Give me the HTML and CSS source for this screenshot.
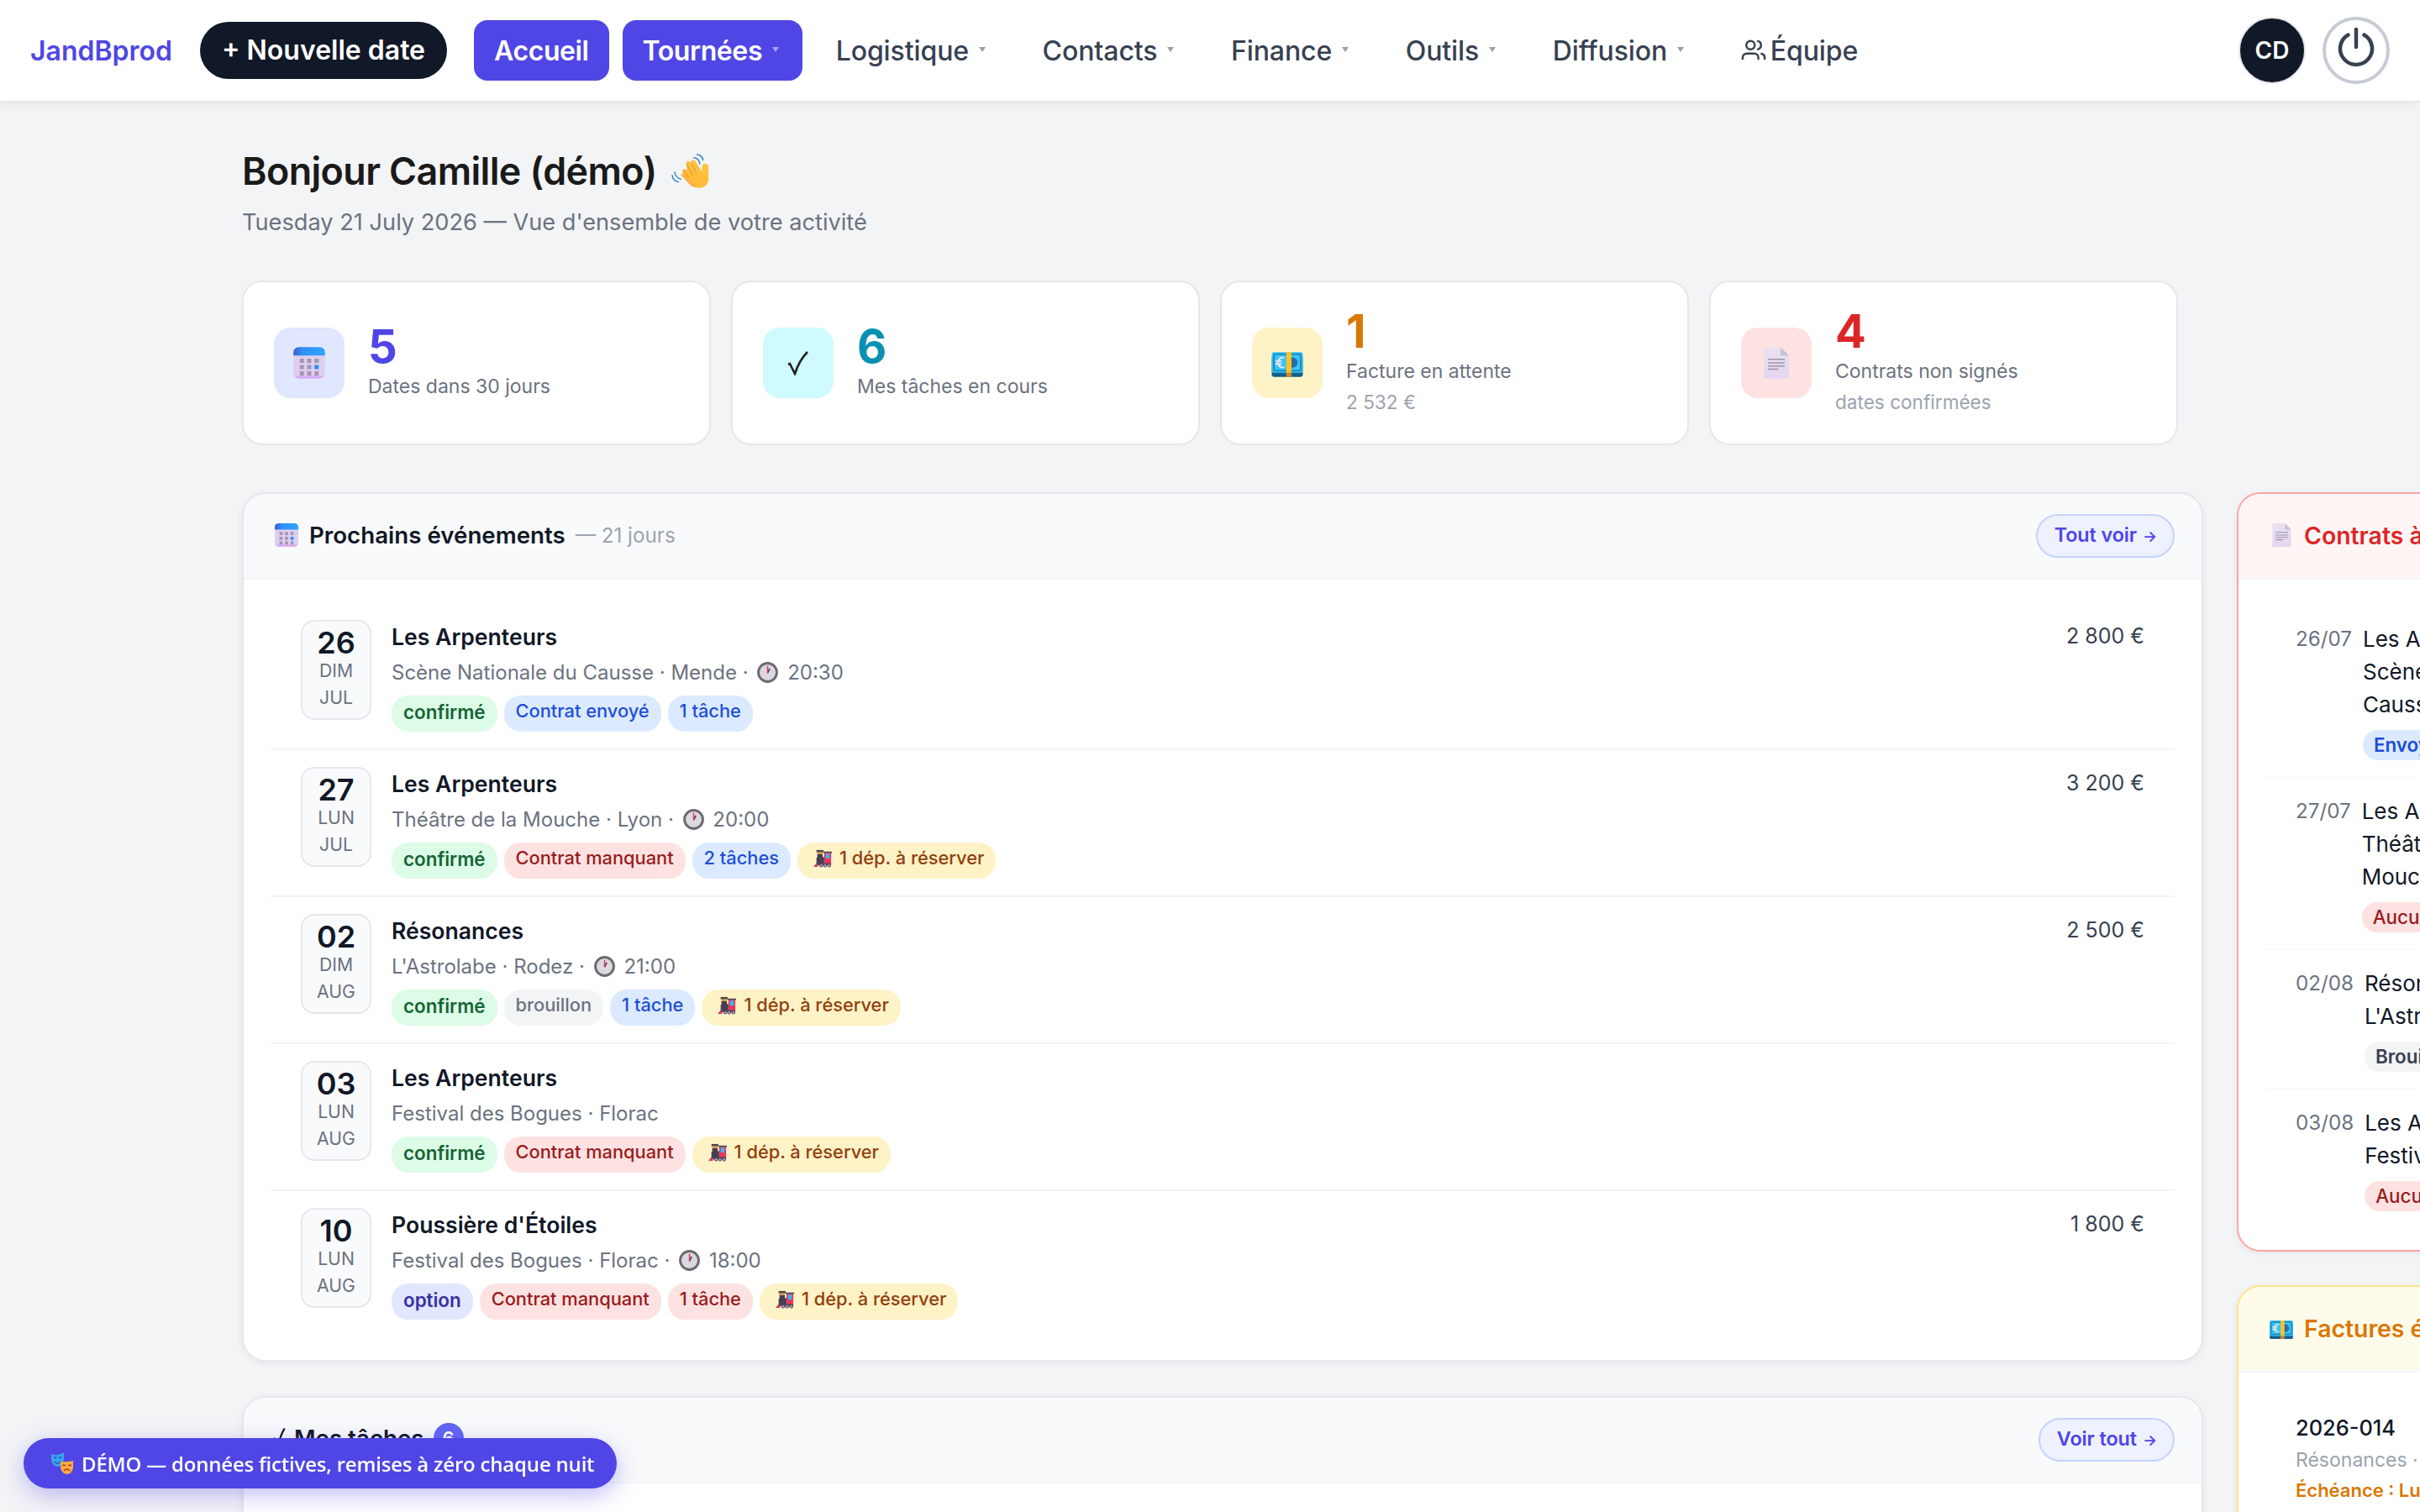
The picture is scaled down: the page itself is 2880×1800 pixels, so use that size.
FILE: index.html
```html
<!DOCTYPE html>
<html lang="fr">
<head>
    <meta charset="UTF-8">
    <meta name="viewport" content="width=device-width, initial-scale=1.0">
    <title>JandBprod - Accueil</title>
    <link rel="stylesheet" href="styles.css">
</head>
<body>
    <!-- Emoji icons shared by the page -->
    <svg class="sprite" width="0" height="0">
        <defs>
            <linearGradient id="blue-top"><stop offset="0" stop-color="#3c5fd0"/><stop offset=".3" stop-color="#3090f8"/><stop offset="1" stop-color="#2ba6ff"/></linearGradient>
            <linearGradient id="paper" x2="0" y2="1"><stop offset="0" stop-color="#e9e2f2"/><stop offset="1" stop-color="#e2d6f0"/></linearGradient>
            <linearGradient id="hand" x1="1" x2="0" y2="1"><stop offset="0" stop-color="#ffc83d"/><stop offset=".7" stop-color="#ffb83c"/><stop offset="1" stop-color="#f58a55"/></linearGradient>
        </defs>
        <symbol id="calendar" viewBox="0 0 32 32">
            <rect x="1" y="1" width="30" height="30" rx="5" fill="#decfee"/>
            <path d="M1 9V6a5 5 0 0 1 5-5h20a5 5 0 0 1 5 5v3z" fill="url(#blue-top)"/>
            <path d="M2 28q2 3 5 3h18q3 0 5-3z" fill="#d9aef5"/>
            <path d="M7 12h4v4H7zM14 12h4v4h-4zM21 12h4v4h-4zM7 18h4v4H7zM14 18h4v4h-4zM7 24h4v4H7zM14 24h4v4h-4zM21 24h4v4h-4z" fill="#a595b5"/>
            <path d="M21 18h4v4h-4z" fill="#3090f8"/>
        </symbol>
        <symbol id="money" viewBox="0 0 32 26">
            <rect x="1" y="5" width="30" height="20" rx="2" fill="#12608f"/>
            <rect x="1" y="1" width="30" height="20" rx="2" fill="#35c5f6"/>
            <rect x="3" y="3" width="26" height="16" rx="1" fill="none" stroke="#2086c0" stroke-width="1.5"/>
            <circle cx="21" cy="11" r="5" fill="#2d6da8"/>
            <path d="M13 6.500q-5-1.500-6 4.500q1 6 6 4.500M4.500 9.500h6M4.500 12.500h6" fill="none" stroke="#e5e5ef" stroke-width="1.700"/>
            <path d="M15 1h5v20h-5z" fill="#ffc423"/>
            <path d="M15 21h5v4h-5z" fill="#d78325"/>
        </symbol>
        <symbol id="page" viewBox="0 0 24 30">
            <path d="M0 0h16l8 8v22H0z" fill="url(#paper)"/>
            <path d="M16 0l8 8h-8z" fill="#c9c3cf"/>
            <path d="M4 11.500h16M4 15h16M4 18h16M4 21h10" stroke="#9d94a8" stroke-width="1.200"/>
        </symbol>
        <symbol id="clock" viewBox="0 0 24 24">
            <circle cx="12" cy="12" r="10.500" fill="#dcd8e0" stroke="#6c696f" stroke-width="2.800"/>
            <path d="M12 12.500l2.500-5" stroke="#433b6b" stroke-width="1.600"/>
            <path d="M12 13V4.500" stroke="#e8325f" stroke-width="1.400"/>
        </symbol>
        <symbol id="train" viewBox="0 0 24 24">
            <path d="M14 5h9v14h-9z" fill="#e8365c"/>
            <path d="M13 3h11v2H13z" fill="#4a3f55"/>
            <path d="M16 6h5v6h-5z" fill="#3fb4f2"/>
            <path d="M5 6h7v4h2v9H4v-8h1z" fill="#463d52"/>
            <path d="M4 1h9v3H4z" fill="#4e4248"/>
            <path d="M5 4h7v2H5z" fill="#e0a03c"/>
            <path d="M4 18h19v3H4z" fill="#5a4865"/>
            <path d="M4 18l-4 5h6z" fill="#e8365c"/>
            <circle cx="10" cy="21" r="2" fill="#a89fb0" stroke="#4a3f55"/>
            <circle cx="15" cy="21" r="2" fill="#a89fb0" stroke="#4a3f55"/>
            <circle cx="20.500" cy="21" r="2" fill="#a89fb0" stroke="#4a3f55"/>
        </symbol>
    </svg>

    <header class="navbar">
        <a class="brand">JandBprod</a>
        <a class="new-date">+ Nouvelle date</a>
        <nav>
            <a class="nav-link active home">Accueil</a>
            <a class="nav-link active">Tournées <i class="caret"></i></a>
            <a class="nav-link">Logistique <i class="caret"></i></a>
            <a class="nav-link">Contacts <i class="caret"></i></a>
            <a class="nav-link">Finance <i class="caret"></i></a>
            <a class="nav-link">Outils <i class="caret"></i></a>
            <a class="nav-link">Diffusion <i class="caret"></i></a>
            <a class="nav-link team">
                <svg viewBox="0 0 24 24" width="30" height="30" fill="none" stroke="currentColor" stroke-width="2" stroke-linecap="round" stroke-linejoin="round"><circle cx="9" cy="7" r="4"/><path d="M1.500 20v-1a4 4 0 0 1 4-4h7a4 4 0 0 1 4 4v1M16 3.130a4 4 0 0 1 0 7.750M22.500 20v-1a4 4 0 0 0-3-3.850"/></svg>Équipe
            </a>
        </nav>
        <div class="avatar">CD</div>
        <div class="power">
            <svg viewBox="0 0 48 48" width="48" height="48" fill="none" stroke="currentColor" stroke-width="4.500" stroke-linecap="round"><path d="M24 1v21M14.500 7.500a19 19 0 1 0 19 0"/></svg>
        </div>
    </header>

    <main>
        <h1>Bonjour Camille (démo)
            <svg class="wave" viewBox="24 30 138 138" width="46" height="46">
                <path d="M61 112q0-7 8-5l-2-6q-2-9 6-10l10 3-3-18q-2-12 6-14q8-1 11 8q-1-11 7-12q8 0 12 9l20 34q0-24 3-27q10-6 19 2q3 12 1 29q4 26-5 40q-9 13-27 13q-25 0-36-13z" fill="url(#hand)"/>
                <path d="M83 76l19 34M97 68l20 34M70 96l18 24" fill="none" stroke="#dd962f" stroke-width="3"/>
                <path d="M119 39q18 2 21 20M107 50q18 2 22 22M39 102q2 18 22 25M30 113q1 18 22 24" fill="none" stroke="#1f78c8" stroke-width="4" stroke-linecap="round"/>
            </svg>
        </h1>
        <p class="subtitle">Tuesday 21 July 2026 — Vue d'ensemble de votre activité</p>

        <!-- Key figures -->
        <section class="stats">
            <div class="stat indigo">
                <div class="stat-icon"><svg width="40" height="40"><use href="#calendar"/></svg></div>
                <div class="stat-text"><strong>5</strong><span>Dates dans 30 jours</span></div>
            </div>
            <div class="stat cyan">
                <div class="stat-icon"><svg viewBox="0 0 26 30" width="26" height="30" fill="none" stroke="#222" stroke-width="2.600"><path d="M1 17l2-1l6 12Q14 12 24 2"/></svg></div>
                <div class="stat-text"><strong>6</strong><span>Mes tâches en cours</span></div>
            </div>
            <div class="stat amber">
                <div class="stat-icon"><svg class="low" width="40" height="32"><use href="#money"/></svg></div>
                <div class="stat-text"><strong>1</strong><span>Facture en attente</span><small>2 532 €</small></div>
            </div>
            <div class="stat red">
                <div class="stat-icon"><svg width="30" height="38"><use href="#page"/></svg></div>
                <div class="stat-text"><strong>4</strong><span>Contrats non signés</span><small>dates confirmées</small></div>
            </div>
        </section>

        <div class="columns">
            <div class="column">
                <!-- Upcoming events -->
                <section class="panel">
                    <div class="panel-head">
                        <h2><svg width="30" height="30"><use href="#calendar"/></svg>Prochains événements <small>— 21 jours</small></h2>
                        <a class="more">Tout voir <i>→</i></a>
                    </div>
                    <div class="events">
                        <article class="event">
                            <div class="date"><b>26</b><span>DIM</span><span>JUL</span></div>
                            <div class="info">
                                <h3>Les Arpenteurs</h3>
                                <p>Scène Nationale du Causse · Mende · <svg width="25" height="25"><use href="#clock"/></svg> 20:30</p>
                                <div class="tags"><span class="tag green">confirmé</span><span class="tag blue">Contrat envoyé</span><span class="tag blue">1 tâche</span></div>
                            </div>
                            <div class="price">2 800 €</div>
                        </article>
                        <article class="event">
                            <div class="date"><b>27</b><span>LUN</span><span>JUL</span></div>
                            <div class="info">
                                <h3>Les Arpenteurs</h3>
                                <p>Théâtre de la Mouche · Lyon · <svg width="25" height="25"><use href="#clock"/></svg> 20:00</p>
                                <div class="tags"><span class="tag green">confirmé</span><span class="tag rose">Contrat manquant</span><span class="tag blue">2 tâches</span><span class="tag yellow"><svg width="22" height="22"><use href="#train"/></svg>1 dép. à réserver</span></div>
                            </div>
                            <div class="price">3 200 €</div>
                        </article>
                        <article class="event">
                            <div class="date"><b>02</b><span>DIM</span><span>AUG</span></div>
                            <div class="info">
                                <h3>Résonances</h3>
                                <p>L'Astrolabe · Rodez · <svg width="25" height="25"><use href="#clock"/></svg> 21:00</p>
                                <div class="tags"><span class="tag green">confirmé</span><span class="tag gray">brouillon</span><span class="tag blue">1 tâche</span><span class="tag yellow"><svg width="22" height="22"><use href="#train"/></svg>1 dép. à réserver</span></div>
                            </div>
                            <div class="price">2 500 €</div>
                        </article>
                        <article class="event">
                            <div class="date"><b>03</b><span>LUN</span><span>AUG</span></div>
                            <div class="info">
                                <h3>Les Arpenteurs</h3>
                                <p>Festival des Bogues · Florac</p>
                                <div class="tags"><span class="tag green">confirmé</span><span class="tag rose">Contrat manquant</span><span class="tag yellow"><svg width="22" height="22"><use href="#train"/></svg>1 dép. à réserver</span></div>
                            </div>
                        </article>
                        <article class="event">
                            <div class="date"><b>10</b><span>LUN</span><span>AUG</span></div>
                            <div class="info">
                                <h3>Poussière d'Étoiles</h3>
                                <p>Festival des Bogues · Florac · <svg width="25" height="25"><use href="#clock"/></svg> 18:00</p>
                                <div class="tags"><span class="tag violet">option</span><span class="tag rose">Contrat manquant</span><span class="tag rose">1 tâche</span><span class="tag yellow"><svg width="22" height="22"><use href="#train"/></svg>1 dép. à réserver</span></div>
                            </div>
                            <div class="price">1 800 €</div>
                        </article>
                    </div>
                </section>

                <!-- Tasks -->
                <section class="panel tasks">
                    <div class="panel-head">
                        <h2><svg class="check" viewBox="0 0 26 30" width="20" height="24" fill="none" stroke="currentColor" stroke-width="3"><path d="M1 17l2-1l6 12Q12 12 19 0"/></svg>Mes tâches <em>6</em></h2>
                        <a class="more">Voir tout <i>→</i></a>
                    </div>
                </section>
            </div>

            <div class="column side">
                <!-- Contracts -->
                <section class="panel danger">
                    <div class="panel-head">
                        <h2><svg width="23" height="28"><use href="#page"/></svg>Contrats à signer</h2>
                    </div>
                    <div class="contracts">
                        <div class="contract">
                            <time>26/07</time>
                            <div><p>Les Arpenteurs<br>Scène Nationale du<br>Causse</p><span class="pill blue">Envoyé</span></div>
                        </div>
                        <div class="contract">
                            <time>27/07</time>
                            <div><p>Les Arpenteurs<br>Théâtre de la<br>Mouche</p><span class="pill rose">Aucun</span></div>
                        </div>
                        <div class="contract">
                            <time>02/08</time>
                            <div><p>Résonances<br>L'Astrolabe</p><span class="pill gray">Brouillon</span></div>
                        </div>
                        <div class="contract">
                            <time>03/08</time>
                            <div><p>Les Arpenteurs<br>Festival des Bogues</p><span class="pill rose">Aucun</span></div>
                        </div>
                    </div>
                </section>

                <!-- Invoices -->
                <section class="panel warning">
                    <div class="panel-head">
                        <h2><svg class="low" width="30" height="24"><use href="#money"/></svg>Factures émises</h2>
                    </div>
                    <div class="invoice">
                        <b>2026-014</b>
                        <span>Résonances · L'Astrolabe</span>
                        <strong>Échéance : Lundi</strong>
                    </div>
                </section>
            </div>
        </div>
    </main>

    <div class="demo">
        <svg viewBox="0 0 26 26" width="26" height="26"><path d="M0 2q7 3 15-2v9q-1 7-7 8q-7-1-8-8z" fill="#3ba2f2"/><path d="M3 7q2-2 3 0M9 7q2-2 3 0M4 11q4 4 7 0" stroke="#1d5fb5" stroke-width="1.400" fill="none"/><path d="M11 11q7 1 15-1v8q-1 7-7 8q-7-1-8-8z" fill="#ffab42"/><path d="M13 16q2-2 4 0M20 16q2-2 4 0M15 22q4-4 7 0" stroke="#a8442a" stroke-width="1.400" fill="none"/></svg>
        DÉMO — données fictives, remises à zéro chaque nuit
    </div>
</body>
</html>
```
FILE: styles.css
```css
* {
    box-sizing: border-box;
}
html, body {
    height: 1800px;
    overflow: hidden;
}
body {
    margin: 0;
    background-color: #f3f4f6;
    color: #111827;
    font-family: Inter, sans-serif;
    font-size: 26px;
}
h1, h2, h3, p {
    margin: 0;
}
svg {
    flex-shrink: 0;
}
.sprite {
    position: absolute;
}

/* Navigation */
.navbar {
    display: flex;
    align-items: center;
    height: 122px;
    padding: 0 36px;
    background-color: white;
    border-bottom: 2px solid #e5e7eb;
    box-shadow: 0 2px 12px rgba(0, 0, 0, 0.06);
    white-space: nowrap;
}
.brand {
    width: 202px;
    color: #4f46e5;
    font-size: 32px;
    font-weight: 600;
}
.new-date {
    width: 294px;
    height: 68px;
    margin-right: 32px;
    border-radius: 34px;
    background-color: #111827;
    color: white;
    font-size: 32px;
    font-weight: 600;
    line-height: 68px;
    text-align: center;
}
nav {
    display: flex;
    gap: 16px;
    flex: 1;
}
.nav-link {
    display: flex;
    align-items: center;
    height: 72px;
    padding: 0 24px;
    border-radius: 16px;
    color: #374151;
    font-size: 32px;
    font-weight: 500;
    letter-spacing: -0.1px;
}
.nav-link.active {
    background-color: #4f46e5;
    color: white;
    font-weight: 600;
    letter-spacing: -0.4px;
}
.caret {
    margin: -2px 3.6px 0 12px;
    border: 4px solid transparent;
    border-top: 6px solid currentColor;
    border-bottom: none;
    opacity: 0.5;
}
.team svg {
    margin-right: 5px;
}
.avatar {
    width: 80px;
    height: 80px;
    margin-right: 20px;
    border: 2px solid #e5e7eb;
    border-radius: 50%;
    background-color: #111827;
    color: white;
    font-size: 28px;
    font-weight: 600;
    line-height: 76px;
    text-align: center;
}
.power {
    display: flex;
    align-items: center;
    justify-content: center;
    width: 80px;
    height: 80px;
    border: 4px solid #c6cbd5;
    border-radius: 50%;
    color: #374151;
}
.power svg {
    overflow: visible;
    margin-top: -4px;
}

/* Page heading */
main {
    width: 2304px;
    margin: 0 auto;
    padding-top: 48px;
}
h1 {
    display: flex;
    align-items: center;
    gap: 16px;
    height: 68px;
    color: #1a1a1a;
    font-size: 44.8px;
    font-weight: 600;
    letter-spacing: -0.58px;
}
.subtitle {
    height: 96px;
    color: #6b7280;
    font-size: 27.2px;
    line-height: 53px;
}

/* Key figures */
.stats {
    display: grid;
    grid-template-columns: repeat(4, 1fr);
    gap: 24px;
    margin-bottom: 56px;
}
.stat {
    display: flex;
    align-items: center;
    gap: 28px;
    height: 196px;
    padding: 0 36px;
    border: 2px solid #e5e7eb;
    border-radius: 24px;
    background-color: white;
}
.stat-icon {
    display: flex;
    align-items: center;
    justify-content: center;
    width: 84px;
    height: 84px;
    border-radius: 20px;
}
.stat-text {
    padding-bottom: 3px;
}
.stat strong, .stat span, .stat small {
    display: block;
}
.stat strong {
    font-size: 54.4px;
    font-weight: 700;
    line-height: 58px;
}
.stat span {
    color: #6b7280;
    font-size: 23px;
    line-height: 38px;
}
.stat small {
    color: #9ca3af;
    font-size: 22.6px;
    line-height: 36px;
}
.indigo strong { color: #4f46e5; }
.indigo .stat-icon { background-color: #e0e7ff; }
.cyan strong { color: #0891b2; }
.cyan .stat-icon { background-color: #cffafe; }
.amber strong { color: #d97706; }
.amber .stat-icon { background-color: #fef3c7; }
.red strong { color: #dc2626; }
.red .stat-icon { background-color: #fee2e2; }
.low {
    margin-top: 4px;
}

/* Panels */
.columns {
    display: grid;
    grid-template-columns: 2334px 660px;
    gap: 40px;
}
.column {
    display: flex;
    flex-direction: column;
    gap: 41px;
}
.column.side {
    gap: 40px;
}
.panel {
    overflow: hidden;
    border: 2px solid #e5e7eb;
    border-radius: 28px;
    background-color: white;
    box-shadow: 0 2px 8px rgba(0, 0, 0, 0.06);
}
.panel-head {
    display: flex;
    align-items: center;
    justify-content: space-between;
    height: 102px;
    padding: 0 32px 0 36px;
    border-bottom: 2px solid #f3f4f6;
    background-color: #f9fafb;
}
h2 {
    display: flex;
    align-items: center;
    margin-top: -2px;
    font-size: 27.7px;
    font-weight: 600;
}
h2 svg {
    margin-right: 12px;
}
h2 small {
    margin-left: 12px;
    color: #9ca3af;
    font-size: 24.2px;
    font-weight: 400;
}
h2 em {
    height: 36px;
    margin-left: 11px;
    padding: 0 11px;
    border-radius: 18px;
    background-color: #6366f1;
    color: white;
    font-size: 22px;
    font-style: normal;
    line-height: 36px;
}
h2 .check {
    margin: 0 6px 0 -2px;
}
.tasks {
    height: 400px;
}
.tasks h2 {
    margin-top: -5px;
}
.more {
    display: flex;
    gap: 7px;
    height: 52px;
    padding: 0 20px;
    border: 2px solid #c7d2fe;
    border-radius: 26px;
    background-color: #eef2ff;
    color: #4f46e5;
    font-size: 23.4px;
    font-weight: 600;
    letter-spacing: -0.1px;
    line-height: 45px;
}
.more i {
    width: 16px;
    padding-top: 2px;
    font-size: 18px;
    font-style: normal;
}

/* Events */
.events {
    padding: 28px 32px;
}
.event {
    display: flex;
    gap: 24px;
    padding: 20px 36px;
    border-bottom: 2px solid #f3f4f6;
}
.event:last-child {
    border-bottom: none;
}
.date {
    width: 84px;
    height: 119px;
    padding-top: 8px;
    border: 2px solid #e5e7eb;
    border-radius: 16px;
    background-color: #f9fafb;
    text-align: center;
}
.date b, .date span {
    display: block;
}
.date b {
    font-size: 36px;
    font-weight: 600;
    line-height: 34px;
}
.date span {
    color: #6b7280;
    font-size: 21.2px;
    line-height: 32px;
}
.info {
    flex: 1;
}
h3 {
    font-size: 26.6px;
    font-weight: 600;
    line-height: 41px;
}
.info p {
    display: flex;
    align-items: center;
    height: 43px;
    color: #6b7280;
    font-size: 24px;
    white-space: pre;
}
.info p svg {
    margin: 0 4px;
}
.tags {
    display: flex;
    gap: 8px;
    margin-top: 6px;
}
.tag {
    display: flex;
    height: 43px;
    padding: 0 14px;
    border-radius: 20px;
    font-size: 21.8px;
    font-weight: 500;
    line-height: 37px;
}
.tag svg {
    margin: 8px 9px 0 5px;
}
.tag.green, .tag.violet {
    font-size: 22.4px;
    font-weight: 600;
    line-height: 40px;
}
.green { background-color: #dcfce7; color: #166534; }
.violet { background-color: #e0e7ff; color: #3730a3; }
.blue { background-color: #dbeafe; color: #1d4ed8; }
.rose { background-color: #fee2e2; color: #991b1b; }
.yellow { background-color: #fef3c7; color: #92400e; }
.gray { background-color: #f3f4f6; color: #6b7280; }
.price {
    color: #374151;
    font-size: 25px;
    line-height: 39px;
}

/* Contracts and invoices */
.danger {
    height: 904px;
    border-color: #fca5a5;
}
.danger .panel-head {
    background-color: #fff5f5;
    color: #dc2626;
}
.danger h2, .warning h2 {
    font-size: 28.4px;
}
.danger h2 {
    padding-left: 4px;
}
.danger h2 svg {
    margin-right: 15px;
}
.warning {
    height: 500px;
    border-color: #fde68a;
}
.warning .panel-head {
    background-color: #fffbeb;
    color: #d97706;
}
.contracts {
    padding: 31px 32px;
}
.contract {
    display: flex;
    gap: 13px;
    padding: 20px 36px 19px;
    border-bottom: 2px solid #f9fafb;
    line-height: 39px;
}
.contract:last-child {
    border-bottom: none;
}
.contract time {
    color: #6b7280;
    font-size: 24.2px;
}
.pill {
    display: inline-block;
    height: 36px;
    margin-top: 11px;
    padding: 0 13px;
    border-radius: 18px;
    font-size: 22.4px;
    font-weight: 600;
    line-height: 36px;
    vertical-align: top;
}
.pill.rose {
    font-weight: 500;
}
.pill.gray {
    color: #374151;
}
.invoice {
    display: flex;
    flex-direction: column;
    padding: 46px 68px;
}
.invoice b {
    font-size: 25.4px;
    font-weight: 500;
    line-height: 40px;
}
.invoice span {
    color: #9ca3af;
    font-size: 23px;
    line-height: 36px;
}
.invoice strong {
    color: #d97706;
    font-size: 22px;
    font-weight: 600;
    line-height: 36px;
}

/* Demo banner */
.demo {
    position: fixed;
    left: 28px;
    bottom: 28px;
    display: flex;
    align-items: center;
    gap: 10px;
    width: 706px;
    height: 60px;
    padding-left: 33px;
    border-radius: 30px;
    background-color: #4f46e5;
    box-shadow: 0 8px 28px rgba(79, 70, 229, 0.35);
    color: white;
    font-family: "Open Sans", "Noto Sans", sans-serif;
    font-size: 24px;
    font-weight: 600;
    letter-spacing: -0.2px;
    white-space: nowrap;
}
```
